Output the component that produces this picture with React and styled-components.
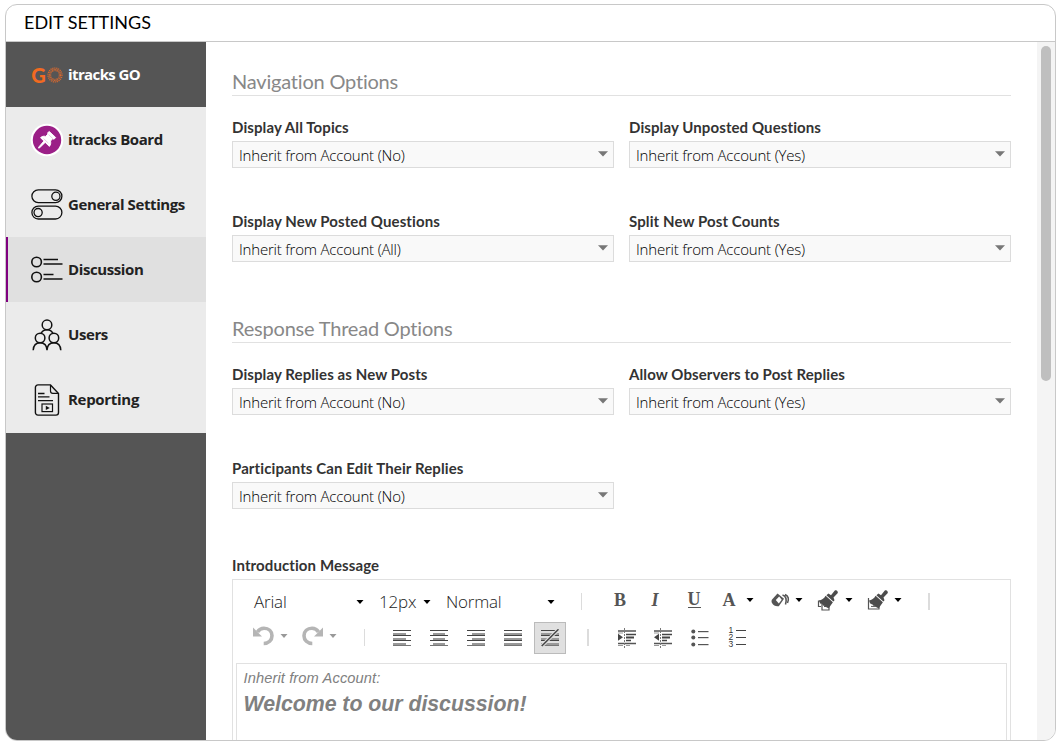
import React from "react";
import styled, { createGlobalStyle, css } from "styled-components";

const GlobalStyle = createGlobalStyle`
  * {
    box-sizing: border-box;
  }
  body {
    margin: 0;
    background-color: #fff;
    overflow: hidden;
    font-variant-ligatures: none;
  }
  svg {
    display: block;
    flex: none;
  }
`;

const Page = styled.div`
  width: 1058px;
  height: 744px;
  padding: 4px 2px 3px 5px;
`;

const Dialog = styled.div`
  display: flex;
  flex-direction: column;
  height: 737px;
  border: 1px solid #c8c8c8;
  border-radius: 12px;
  overflow: hidden;
`;

const Header = styled.header`
  flex: none;
  height: 37px;
  padding-left: 18px;
  border-bottom: 1px solid #c8c8c8;
  font-family: Lato, sans-serif;
  font-size: 18px;
  line-height: 34px;
  color: #000;
`;

const Body = styled.div`
  display: flex;
  flex: 1;
  min-height: 0;
`;

// ---------- sidebar ----------

const Sidebar = styled.nav`
  width: 200px;
  background-color: #555;
`;

const NavItem = styled.div`
  display: flex;
  align-items: center;
  height: ${(props) => props.$height || 65}px;
  padding-left: 25px;
  background-color: #ebebeb;
  color: #222;
  font-family: "Open Sans", "Noto Sans", sans-serif;
  font-size: 15px;
  font-weight: 700;
  line-height: 20px;
  letter-spacing: ${(props) => props.$spacing || 0}px;
  white-space: nowrap;

  ${(props) =>
    props.$dark &&
    css`
      background-color: #555;
      color: #fff;
    `}
  ${(props) =>
    props.$active &&
    css`
      background-color: #e0e0e0;
      box-shadow: inset 2px 0 0 #800080;
    `}
`;

const NavIcon = styled.span`
  display: flex;
  justify-content: center;
  width: 32px;
  margin-right: 5px;
`;

const NavText = styled.span`
  padding-bottom: 2px;
`;

const GoLogo = styled.span`
  display: flex;
  align-items: center;
  gap: 1px;
  color: #f26a21;
  font-family: Lato, sans-serif;
  font-size: 20px;
  font-weight: 900;
  line-height: 20px;
  letter-spacing: 0;
`;

// ---------- content ----------

const Content = styled.main`
  flex: 1;
  min-width: 0;
  padding: 26px 26px 0;
  overflow: hidden;
`;

const ScrollTrack = styled.div`
  width: 18px;
  padding: 4px 4px 0;
  background-color: #f4f4f4;
`;

const ScrollThumb = styled.div`
  width: 10px;
  height: 335px;
  border-radius: 5px;
  background-color: #bfbfbf;
`;

const SectionTitle = styled.h2`
  height: 28px;
  margin: 0 0 22px;
  border-bottom: 1px solid #e1e1e1;
  font-family: Lato, sans-serif;
  font-size: 20px;
  font-weight: 400;
  line-height: 26px;
  letter-spacing: -0.2px;
  color: #888;
`;

const Fields = styled.div`
  display: grid;
  grid-template-columns: 382px 382px;
  column-gap: 15px;
  grid-auto-rows: 94px;
  margin-bottom: ${(props) => props.$gap || 0}px;
`;

const Label = styled.div`
  height: 23px;
  font-family: Lato, sans-serif;
  font-size: 15px;
  font-weight: 700;
  line-height: 18px;
  letter-spacing: 0.1px;
  color: #333;
`;

const SelectBox = styled.div`
  display: flex;
  align-items: center;
  justify-content: space-between;
  height: 27px;
  padding: 1px 5px 0 6px;
  border: 1px solid #dcdcdc;
  background-color: #f9f9f9;
  font-family: "Open Sans", "Noto Sans", sans-serif;
  font-size: 15px;
  font-weight: 350;
  line-height: 22px;
  letter-spacing: -0.2px;
  color: #000;

  svg {
    margin-top: -2px;
  }
`;

// ---------- editor ----------

const Editor = styled.div`
  height: 180px;
  padding: 4px 3px 0;
  border: 1px solid #e1e1e1;
`;

const ToolRow = styled.div`
  display: flex;
  align-items: center;
  height: ${(props) => props.$height}px;
  padding-left: ${(props) => props.$left}px;
  padding-bottom: ${(props) => props.$bottom || 0}px;
`;

const Picker = styled.div`
  display: flex;
  align-items: center;
  justify-content: space-between;
  width: ${(props) => props.$width}px;
  margin-right: 15px;
  padding-top: 2px;
  font-family: "Open Sans", "Noto Sans", sans-serif;
  font-size: 17px;
  font-weight: 350;
  line-height: 24px;
  letter-spacing: -0.2px;
  color: #222;
`;

const Tool = styled.div`
  display: flex;
  align-items: center;
  justify-content: center;
  width: 28px;
  height: 32px;
  margin-left: ${(props) => props.$ml || 0}px;
  padding-bottom: 2px;
`;

const Letter = styled.span`
  font-family: "Liberation Serif", serif;
  font-size: 18px;
  font-weight: 700;
  font-style: ${(props) => (props.$italic ? "italic" : "normal")};
  line-height: ${(props) => (props.$underline ? "15px" : "18px")};
  border-bottom: ${(props) => (props.$underline ? "1px solid #555" : "0")};
  color: #555;
`;

const Divider = styled.div`
  width: ${(props) => props.$width || 1}px;
  height: 17px;
  margin-left: ${(props) => props.$ml || 0}px;
  background-color: #dcdcdc;
`;

const ArrowSlot = styled.span`
  margin-left: ${(props) => props.$ml || 3}px;
  padding-bottom: 3px;
`;

const AlignTool = styled.div`
  display: flex;
  align-items: center;
  justify-content: center;
  width: 32px;
  height: 32px;
  margin-left: ${(props) => (props.$ml === undefined ? 5 : props.$ml)}px;
  border: 1px solid ${(props) => (props.$on ? "#bbb" : "transparent")};
  background-color: ${(props) => (props.$on ? "#e0e0e0" : "transparent")};
`;

const NumberList = styled.div`
  display: grid;
  grid-template-columns: 5px 10px;
  grid-auto-rows: 7px;
  column-gap: 2px;
  align-items: center;
  font-family: "Liberation Sans", Arial, sans-serif;
  font-size: 8.5px;
  line-height: 7px;
  color: #333;
`;

const NumberLine = styled.i`
  height: 1px;
  background-color: #444;
`;

const EditArea = styled.div`
  height: 120px;
  padding: 5px 6.5px;
  border: 1px solid #e1e1e1;
  font-family: "Liberation Sans", Arial, sans-serif;
  font-style: italic;
  color: #808080;
`;

const Inherited = styled.div`
  font-size: 14.67px;
  line-height: 18px;
  letter-spacing: 0.11px;
`;

const Welcome = styled.div`
  margin-top: 5px;
  font-size: 21.33px;
  font-weight: 700;
  line-height: 24px;
  letter-spacing: -0.04px;
`;

// ---------- icons ----------

const Caret = ({ color = "#000" }) => (
  <svg width="8" height="4" viewBox="0 0 8 4">
    <path d="M.5 0h7L4 4z" fill={color} />
  </svg>
);

const SelectCaret = () => (
  <svg width="10" height="6" viewBox="0 0 10 6">
    <path d="M0 .3h10L5 5.6z" fill="#777" />
  </svg>
);

const SunRing = () => (
  <svg width="16" height="16" viewBox="0 0 16 16" fill="none" stroke="#d9692f">
    <circle cx="8" cy="8" r="7" strokeWidth="1.2" strokeDasharray="1.2 .8" />
    <circle cx="8" cy="8" r="5.5" strokeWidth="1.3" strokeDasharray="1.1 .6" />
    <circle cx="8" cy="8" r="4.3" strokeWidth="1" strokeDasharray="1 .5" />
  </svg>
);

const BoardIcon = () => (
  <svg width="34" height="34" viewBox="0 0 34 34">
    <circle cx="17" cy="17" r="16.3" fill="#fff" />
    <circle cx="17" cy="17" r="14.2" fill="#9b1f87" />
    <path
      d="M19.3 8.5l6.4 6-1.6 1.7-1.4-.5-2.2 2.3c.5 2.1.2 3.8-1.1 5.4l-4.2-4-5.5 5.3-1.2.4.5-1.3 4.9-5.8-3.4-3.3c1.5-1.4 3.2-1.800 5.100-1.300l2.400-2.400-.4-1.200z"
      fill="#fff"
      stroke="#fff"
      strokeWidth=".9"
    />
    <path d="M13.5 15.5l5 4.800M18.500 11.500l4.300 4.100" stroke="#e3bfdd" strokeWidth=".8" />
  </svg>
);

const SettingsIcon = () => (
  <svg width="32" height="31" viewBox="0 0 32 31" fill="none" stroke="#111" strokeWidth="1.3">
    <rect x=".9" y=".9" width="30" height="12.8" rx="6.4" />
    <circle cx="24.9" cy="7.3" r="4.1" />
    <rect x=".9" y="17.2" width="30" height="12.8" rx="6.4" />
    <circle cx="7.1" cy="23.6" r="4.1" />
  </svg>
);

const DiscussionIcon = () => (
  <svg width="32" height="27" viewBox="0 0 32 27" fill="none" stroke="#111" strokeWidth="1.6">
    <circle cx="5.6" cy="6" r="4.8" />
    <circle cx="5.6" cy="21" r="4.8" />
    <path d="M12.5 3.5H27M12.5 8H31.5M12.5 18.500h10M12.5 23h19" />
  </svg>
);

const UsersIcon = () => (
  <svg width="30" height="32" viewBox="0 0 30 32" fill="none" stroke="#111" strokeWidth="1.5">
    <circle cx="15" cy="5.9" r="4.8" />
    <circle cx="8.1" cy="19" r="4.8" />
    <circle cx="21.9" cy="19" r="4.8" />
    <path d="M9.2 14.2c1-2.2 3-3.5 5.8-3.5s4.8 1.3 5.8 3.5M1.2 31.2c.3-4.6 2.9-7.4 6.9-7.4s6.7 2.8 6.9 7.4c.2-4.6 2.9-7.4 6.9-7.4s6.6 2.8 6.9 7.4" />
  </svg>
);

const ReportIcon = () => (
  <svg width="26" height="32" viewBox="0 0 26 32" fill="none" stroke="#111" strokeWidth="1.4">
    <path d="M4 .9h12.5l8 8.6v19c0 1.5-1 2.6-2.5 2.6H4c-1.5 0-2.6-1.1-2.6-2.6v-25C1.4 2 2.5.9 4 .9z" />
    <path d="M16.5 1v6c0 1.500.8 2.400 2.300 2.400h5.500" strokeWidth="1.2" />
    <path d="M4 9.5h6.5M4 12.8h11.5M4 16.7h15" strokeWidth="1.3" />
    <rect x="8" y="20" width="10.5" height="7.6" strokeWidth="1.2" />
    <path d="M11.8 21.7l4 2.2-4 2.2z" fill="#111" stroke="none" />
  </svg>
);

const UndoIcon = ({ flip }) => (
  <svg width="21" height="20" viewBox="0 0 21 20">
    <g transform={flip ? "translate(21 0) scale(-1 1)" : undefined}>
      <path
        d="M4.5 6C6 3.5 8 2.3 11 2.3c4.6 0 8 3.1 8 7.5s-3.4 7.700-8.300 7.700"
        fill="none"
        stroke="#b5b5b5"
        strokeWidth="3.600"
      />
      <path d="M0 1.500v9h9z" fill="#b5b5b5" />
    </g>
  </svg>
);

const LINES = {
  left: [[0, 18], [0, 13]],
  center: [[0, 18], [3, 15]],
  right: [[0, 18], [5, 18]],
  full: [[0, 18], [0, 18]],
};

const AlignIcon = ({ kind, crossed }) => (
  <svg width="18" height="18" viewBox="0 0 18 18">
    {[1, 4, 6, 9, 11, 14].map((y, i) => {
      const [from, to] = LINES[kind][i % 2];
      return (
        <rect
          key={y}
          x={from}
          y={y}
          width={to - from}
          height={i % 2 ? 2 : 1}
          fill={i % 2 ? "#999" : "#444"}
        />
      );
    })}
    <rect width="18" height="1" y="16" fill="#777" />
    {crossed && <path d="M.8 17L17.5.3" stroke="#e0e0e0" strokeWidth="3.5" />}
    {crossed && <path d="M.8 17L17.5.3" stroke="#444" strokeWidth="1.5" />}
  </svg>
);

const IndentIcon = ({ out }) => (
  <svg width="18" height="20" viewBox="0 0 18 20">
    <path d="M0 3h18M0 15.5h18" stroke="#555" strokeWidth="1.3" />
    <path d="M0 5h5M0 17.5h5M8 17.5h4" stroke="#999" strokeWidth="1" />
    <path d="M8 6.5h10M8 12.5h5" stroke="#444" strokeWidth="1.6" />
    <path d="M8 9.5h8" stroke="#444" strokeWidth="2" />
    <path d="M6.5 0v20" stroke="#777" strokeWidth="1" strokeDasharray="2 1" />
    <path d={out ? "M5 5.800v7L0 9.300z" : "M0 5.800v7l5-3.500z"} fill="#444" />
  </svg>
);

const BulletIcon = () => (
  <svg width="18" height="18" viewBox="0 0 18 18">
    {[2.5, 8.5, 15.5].map((y) => (
      <g key={y}>
        <circle cx="2.300" cy={y} r="2" fill="#555" />
        <rect x="7" y={y - 0.5} width="10.500" height="1.200" fill="#555" />
      </g>
    ))}
  </svg>
);

const BucketIcon = () => (
  <svg width="19" height="14" viewBox="0 0 19 14">
    <path d="M6.5.5L13 5.8l-5.2 7.4c-3 .5-5.3-.6-6.8-3.2-.9-1.7-.5-3 .5-4.1z" fill="#555" />
    <path d="M8.2 3.6l2.5 3.1-2.9 3.7-3-3.4z" fill="#fff" />
    <path d="M11.5 2c3.6 1 4.5 4 3 9.5M14 1.5c3.4 1.5 4.3 4.5 2.5 8.5" fill="none" stroke="#555" strokeWidth="1.5" />
  </svg>
);

const BrushIcon = ({ list }) => (
  <svg width="22" height="22" viewBox="0 0 22 22">
    {list ? (
      <>
        <path d="M1.5 9v11h10.5v-3" fill="none" stroke="#555" strokeWidth="1.2" />
        <path d="M4 12h3M4 14.7h5M4 17.4h6" stroke="#555" />
      </>
    ) : (
      <path d="M3 12H1.5v5.5H4M5 15v6h7v-4M7 17.5h2" fill="none" stroke="#555" strokeWidth="1.2" />
    )}
    <path d="M11.500 4.500l2.500 1.800 3.600-4.600c1.200-1.400 4.200.8 3 2.600L16.500 8.600l1 2.600-1.100 1.300-7-6.300z" fill="#4c4c4c" />
    <path d="M8.600 6.700l7.300 6.600-4.200 6-2-.7-1.300-1.500-2-.3-1.300-1.700-2-.7L2 11.500c2.500-.4 5-2 6.600-4.800z" fill="#4c4c4c" />
  </svg>
);

// ---------- page ----------

const Select = ({ label, value }) => (
  <div>
    <Label>{label}</Label>
    <SelectBox>
      {value}
      <SelectCaret />
    </SelectBox>
  </div>
);

function App() {
  return (
    <Page>
      <GlobalStyle />
      <Dialog>
        <Header>EDIT SETTINGS</Header>
        <Body>
          <Sidebar>
            <NavItem $dark $spacing={-0.6}>
              <NavIcon>
                <GoLogo>
                  G<SunRing />
                </GoLogo>
              </NavIcon>
              <NavText>itracks GO</NavText>
            </NavItem>
            <NavItem $spacing={-0.4}>
              <NavIcon>
                <BoardIcon />
              </NavIcon>
              <NavText>itracks Board</NavText>
            </NavItem>
            <NavItem $spacing={-0.4}>
              <NavIcon>
                <SettingsIcon />
              </NavIcon>
              <NavText>General Settings</NavText>
            </NavItem>
            <NavItem $active $spacing={-0.4}>
              <NavIcon>
                <DiscussionIcon />
              </NavIcon>
              <NavText>Discussion</NavText>
            </NavItem>
            <NavItem $spacing={-0.4}>
              <NavIcon>
                <UsersIcon />
              </NavIcon>
              <NavText>Users</NavText>
            </NavItem>
            <NavItem $height={66} $spacing={-0.3}>
              <NavIcon>
                <ReportIcon />
              </NavIcon>
              <NavText>Reporting</NavText>
            </NavItem>
          </Sidebar>

          <Content>
            <SectionTitle>Navigation Options</SectionTitle>
            <Fields $gap={9}>
              <Select label="Display All Topics" value="Inherit from Account (No)" />
              <Select label="Display Unposted Questions" value="Inherit from Account (Yes)" />
              <Select label="Display New Posted Questions" value="Inherit from Account (All)" />
              <Select label="Split New Post Counts" value="Inherit from Account (Yes)" />
            </Fields>

            <SectionTitle>Response Thread Options</SectionTitle>
            <Fields $gap={3}>
              <Select label="Display Replies as New Posts" value="Inherit from Account (No)" />
              <Select label="Allow Observers to Post Replies" value="Inherit from Account (Yes)" />
              <Select label="Participants Can Edit Their Replies" value="Inherit from Account (No)" />
            </Fields>

            <Label>Introduction Message</Label>
            <Editor>
              <ToolRow $height={34} $left={18}>
                <Picker $width={110}>
                  Arial <Caret />
                </Picker>
                <Picker $width={52}>
                  12px <Caret />
                </Picker>
                <Picker $width={109}>
                  Normal <Caret />
                </Picker>
                <Divider $ml={11} />
                <Tool $ml={24}>
                  <Letter>B</Letter>
                </Tool>
                <Tool $ml={7}>
                  <Letter $italic>I</Letter>
                </Tool>
                <Tool $ml={11}>
                  <Letter $underline>U</Letter>
                </Tool>
                <Tool $ml={7}>
                  <Letter>A</Letter>
                </Tool>
                <ArrowSlot>
                  <Caret />
                </ArrowSlot>
                <Tool $ml={12}>
                  <BucketIcon />
                </Tool>
                <ArrowSlot $ml={1}>
                  <Caret />
                </ArrowSlot>
                <Tool $ml={11}>
                  <BrushIcon />
                </Tool>
                <ArrowSlot>
                  <Caret />
                </ArrowSlot>
                <Tool $ml={11}>
                  <BrushIcon list />
                </Tool>
                <ArrowSlot $ml={2}>
                  <Caret />
                </ArrowSlot>
                <Divider $ml={26} $width={2} />
              </ToolRow>

              <ToolRow $height={45} $left={17} $bottom={6}>
                <ArrowSlot $ml={0.1}>
                  <UndoIcon />
                </ArrowSlot>
                <ArrowSlot $ml={6}>
                  <Caret color="#999" />
                </ArrowSlot>
                <ArrowSlot $ml={14}>
                  <UndoIcon flip />
                </ArrowSlot>
                <ArrowSlot $ml={6}>
                  <Caret color="#999" />
                </ArrowSlot>
                <Divider $ml={27} />
                <AlignTool $ml={21}>
                  <AlignIcon kind="left" />
                </AlignTool>
                <AlignTool>
                  <AlignIcon kind="center" />
                </AlignTool>
                <AlignTool>
                  <AlignIcon kind="right" />
                </AlignTool>
                <AlignTool>
                  <AlignIcon kind="full" />
                </AlignTool>
                <AlignTool $on>
                  <AlignIcon kind="full" crossed />
                </AlignTool>
                <Divider $ml={21} $width={2} />
                <AlignTool $ml={22}>
                  <IndentIcon />
                </AlignTool>
                <AlignTool $ml={4}>
                  <IndentIcon out />
                </AlignTool>
                <AlignTool>
                  <BulletIcon />
                </AlignTool>
                <AlignTool>
                  <NumberList>
                    1<NumberLine />
                    2<NumberLine />
                    3<NumberLine />
                  </NumberList>
                </AlignTool>
              </ToolRow>

              <EditArea>
                <Inherited>Inherit from Account:</Inherited>
                <Welcome>Welcome to our discussion!</Welcome>
              </EditArea>
            </Editor>
          </Content>

          <ScrollTrack>
            <ScrollThumb />
          </ScrollTrack>
        </Body>
      </Dialog>
    </Page>
  );
}

export default App;
